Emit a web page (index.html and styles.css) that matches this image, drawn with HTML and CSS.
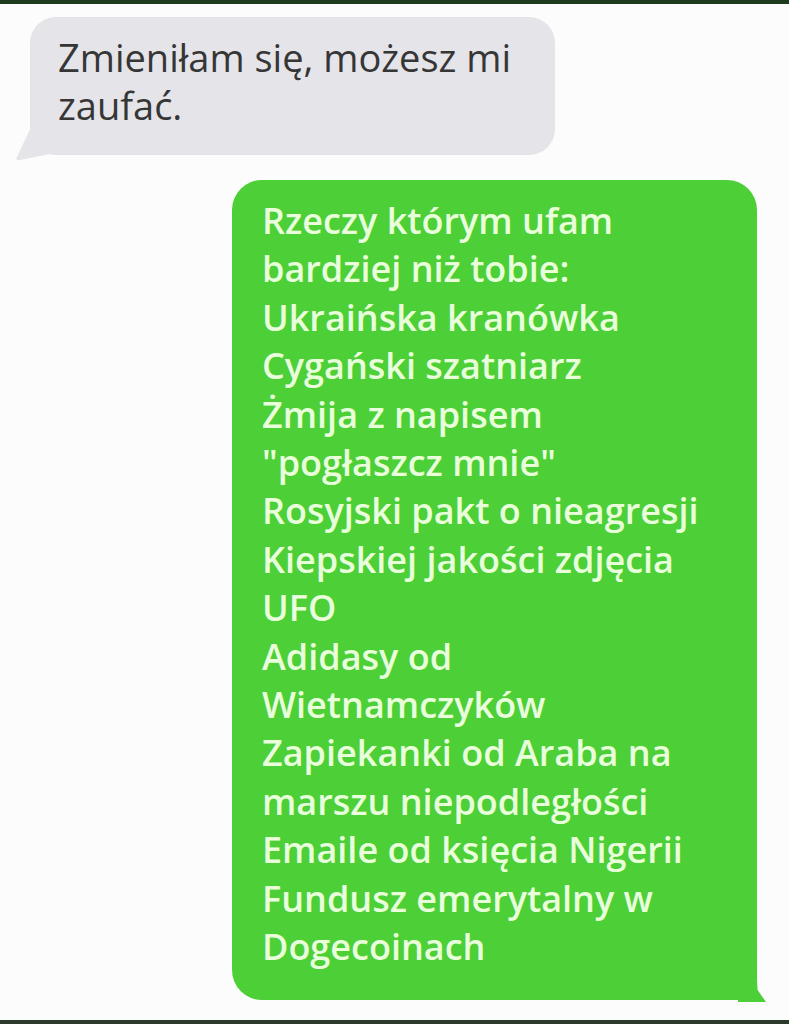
FILE: index.html
```html
<!DOCTYPE html>
<html lang="pl">
<head>
    <meta charset="UTF-8">
    <meta name="viewport" content="width=device-width, initial-scale=1.0">
    <title>Wiadomości</title>
    <link rel="stylesheet" href="styles.css">
</head>
<body>
    <div class="chat">
        <div class="bubble received">
            Zmieniłam się, możesz mi<br>
            zaufać.
        </div>

        <div class="bubble sent">
            Rzeczy którym ufam<br>
            bardziej niż tobie:<br>
            Ukraińska kranówka<br>
            Cygański szatniarz<br>
            Żmija z napisem<br>
            "pogłaszcz mnie"<br>
            Rosyjski pakt o nieagresji<br>
            Kiepskiej jakości zdjęcia<br>
            UFO<br>
            Adidasy od<br>
            Wietnamczyków<br>
            Zapiekanki od Araba na<br>
            marszu niepodległości<br>
            Emaile od księcia Nigerii<br>
            Fundusz emerytalny w<br>
            Dogecoinach
        </div>
    </div>
</body>
</html>
```

FILE: styles.css
```css
* {
    box-sizing: border-box;
    margin: 0;
    padding: 0;
}
body {
    width: 789px;
    height: 1024px;
    background: #fbfcfb;
    border-top: 4px solid #1d3a1c;
    border-bottom: 4px solid #2b3a2c;
    font-family: "Open Sans", "DejaVu Sans", sans-serif;
    overflow: hidden;
}
.chat {
    display: flex;
    flex-direction: column;
    padding-top: 13px;
}
.bubble {
    position: relative;
    white-space: nowrap;
}
.received {
    margin-left: 30px;
    width: 525px;
    height: 138px;
    padding: 16px 0 0 28px;
    background: #e4e4e9;
    border-radius: 26px;
    color: #363636;
    font-size: 38px;
    line-height: 48px;
}
.received::before {
    content: "";
    position: absolute;
    left: -15px;
    bottom: -6px;
    width: 40px;
    height: 32px;
    background: #e4e4e9;
    clip-path: polygon(38% 0, 100% 0, 100% 75%, 0 100%);
    border-radius: 0 0 0 6px;
}
.sent {
    margin-top: 25px;
    margin-left: 232px;
    width: 525px;
    height: 820px;
    padding: 17px 0 0 30px;
    background: #4ccf37;
    border-radius: 30px 30px 0 30px;
    color: #e9ffdc;
    font-weight: 600;
    font-size: 36px;
    line-height: 48.4px;
    letter-spacing: 0;
}
.sent::after {
    content: "";
    position: absolute;
    right: -9px;
    bottom: -2px;
    width: 28px;
    height: 60px;
    background: #4ccf37;
    clip-path: polygon(0 0, 60% 0, 70% 80%, 100% 100%, 0 100%);
}
```
